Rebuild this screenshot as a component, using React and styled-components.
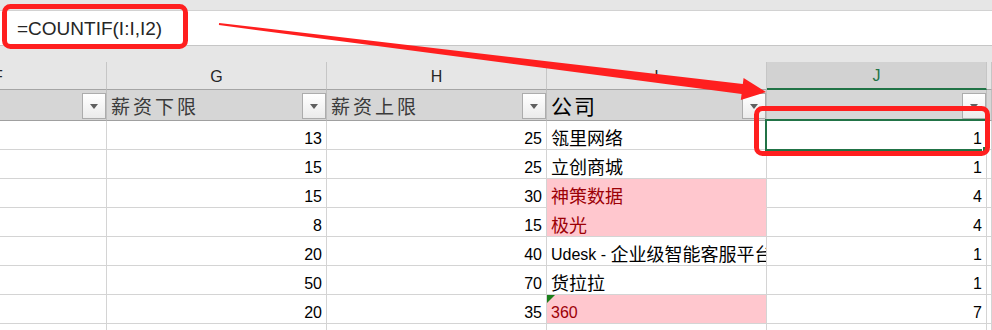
import React from 'react';
import styled, { createGlobalStyle } from 'styled-components';

const GlobalStyle = createGlobalStyle`
  html, body { margin: 0; padding: 0; background: #e6e6e6; }
  body { font-family: "Liberation Sans", "Noto Sans CJK SC", sans-serif; }
  #root { width: 992px; }
`;

const COLS = '107px 220px 220px 220px 220px 1fr';
const GRID = '#d4d4d4';
const PINK = '#ffc7ce';
const GREEN = '#217346';

const Page = styled.div`
  position: relative;
  width: 992px;
  height: 330px;
  overflow: hidden;
  background: #e6e6e6;
  padding-top: 10px;
  box-sizing: border-box;
`;

const FormulaBar = styled.div`
  height: 36px;
  box-sizing: border-box;
  background: #fff;
  border-top: 1px solid #d2d2d2;
  border-bottom: 1px solid #c6c6c6;
  display: flex;
  align-items: center;
  padding: 2px 0 0 17px;
  font: 19px "Liberation Sans", sans-serif;
  color: #262626;
`;

const Sheet = styled.div`
  margin-top: 16px;
`;

const Row = styled.div`
  display: grid;
  grid-template-columns: ${COLS};
  height: ${(p) => p.$h}px;
`;

const ColHead = styled.div`
  box-sizing: border-box;
  overflow: hidden;
  border-right: 1px solid #c6c6c6;
  border-bottom: ${(p) => (p.$active ? `2px solid ${GREEN}` : '1px solid #a5a5a5')};
  background: ${(p) => (p.$active ? '#d2d2d2' : '#e6e6e6')};
  color: ${(p) => (p.$active ? GREEN : '#262626')};
  display: flex;
  justify-content: ${(p) => (p.$cut ? 'flex-start' : 'center')};
  align-items: center;
  padding-top: 2px;
  font-size: 16px;
`;

const CutLetter = styled.span`
  margin-left: -7px;
`;

const HeadCell = styled.div`
  box-sizing: border-box;
  min-width: 0;
  overflow: hidden;
  background: #d6d6d6;
  border-right: 1px solid #bebebe;
  border-bottom: 1px solid #a0a0a0;
  display: flex;
  align-items: center;
  justify-content: space-between;
  padding-left: 4px;
`;

const HeadLabel = styled.span`
  font-family: "Noto Sans CJK SC", sans-serif;
  font-size: ${(p) => (p.$strong ? 21 : 19)}px;
  letter-spacing: ${(p) => (p.$strong ? 2 : 3)}px;
  color: ${(p) => (p.$strong ? '#000' : '#3a3a3a')};
  white-space: nowrap;
  line-height: 1;
  padding-top: 1px;
`;

const FilterButton = styled.span`
  width: 24px;
  height: 26px;
  box-sizing: border-box;
  flex-shrink: 0;
  align-self: flex-end;
  margin-bottom: 1px;
  border: 1px solid #acacac;
  background: linear-gradient(#ffffff, #ebebeb);
  display: flex;
  align-items: center;
  justify-content: center;
  &::after {
    content: '';
    border-left: 4.5px solid transparent;
    border-right: 4.5px solid transparent;
    border-top: 5px solid #5f5f5f;
  }
`;

const Cell = styled.div`
  position: relative;
  box-sizing: border-box;
  min-width: 0;
  overflow: ${(p) => (p.$clip ? 'hidden' : 'visible')};
  border-right: 1px solid ${GRID};
  border-bottom: 1px solid ${(p) => (p.$dup && p.$nextDup ? PINK : GRID)};
  background: ${(p) => (p.$dup ? PINK : '#fff')};
  color: ${(p) => (p.$dup ? '#9c0006' : '#000')};
  display: flex;
  align-items: flex-end;
  justify-content: ${(p) => (p.$right ? 'flex-end' : 'flex-start')};
  padding: ${(p) => (p.$right ? '0 4px 0 0' : '0 0 0 4px')};
  font-family: "Liberation Sans", "Noto Sans CJK SC", sans-serif;
  font-size: ${(p) => (p.$cjk ? 18 : 16)}px;
  line-height: 20px;
  white-space: nowrap;
`;

const Latin = styled.span`
  font-size: 16px;
  white-space: pre;
`;

const Selection = styled.span`
  position: absolute;
  z-index: 2;
  top: -2px;
  left: -2px;
  right: -1px;
  bottom: -2px;
  border: 2px solid ${GREEN};
  pointer-events: none;
  &::after {
    content: '';
    position: absolute;
    right: -3px;
    bottom: -3px;
    width: 5px;
    height: 5px;
    background: ${GREEN};
    border-left: 1px solid #fff;
    border-top: 1px solid #fff;
  }
`;

const ErrorMark = styled.span`
  position: absolute;
  top: 0;
  left: 0;
  width: 0;
  height: 0;
  border-top: 8px solid #1a7f1a;
  border-right: 8px solid transparent;
`;

const Annotations = styled.svg`
  position: absolute;
  left: 0;
  top: 0;
  z-index: 5;
  pointer-events: none;
`;

const rows = [
  { g: 13, h: 25, i: '瓴里网络', j: 1, k: '上海' },
  { g: 15, h: 25, i: '立创商城', j: 1, k: '北京' },
  { g: 15, h: 30, i: '神策数据', j: 4, k: '数据', dup: true },
  { g: 8, h: 15, i: '极光', j: 4, k: '北京', dup: true },
  { g: 20, h: 40, i: 'Udesk - 企业级智能客服平台', j: 1, k: '北京' },
  { g: 50, h: 70, i: '货拉拉', j: 1, k: '深圳' },
  { g: 20, h: 35, i: '360', j: 7, k: '北京', dup: true, err: true },
  { empty: true },
];

function Mixed({ text }) {
  const parts = text.split(/([\x00-\x7F]+)/).filter(Boolean);
  return parts.map((p, idx) =>
    /^[\x00-\x7F]+$/.test(p) ? <Latin key={idx}>{p}</Latin> : <span key={idx}>{p}</span>
  );
}

export default function App() {
  return (
    <>
      <GlobalStyle />
      <Page>
        <FormulaBar>=COUNTIF(I:I,I2)</FormulaBar>
        <Sheet>
          <Row $h={28}>
            <ColHead $cut><CutLetter>F</CutLetter></ColHead>
            <ColHead>G</ColHead>
            <ColHead>H</ColHead>
            <ColHead>I</ColHead>
            <ColHead $active>J</ColHead>
            <ColHead />
          </Row>
          <Row $h={31}>
            <HeadCell><span /><FilterButton /></HeadCell>
            <HeadCell><HeadLabel>薪资下限</HeadLabel><FilterButton /></HeadCell>
            <HeadCell><HeadLabel>薪资上限</HeadLabel><FilterButton /></HeadCell>
            <HeadCell><HeadLabel $strong>公司</HeadLabel><FilterButton /></HeadCell>
            <HeadCell><span /><FilterButton /></HeadCell>
            <HeadCell />
          </Row>
          {rows.map((r, idx) => {
            const next = rows[idx + 1] || {};
            return (
              <Row $h={29} key={idx}>
                <Cell />
                <Cell $right>{r.g}</Cell>
                <Cell $right>{r.h}</Cell>
                <Cell $cjk $clip $dup={r.dup} $nextDup={next.dup}>
                  {r.err && <ErrorMark />}
                  {r.i && <Mixed text={r.i} />}
                </Cell>
                <Cell $right>
                  {r.j}
                  {idx === 0 && <Selection />}
                </Cell>
                <Cell $cjk $clip>{r.k}</Cell>
              </Row>
            );
          })}
        </Sheet>
        <Annotations width="992" height="330" viewBox="0 0 992 330">
          <rect x="4.5" y="6.5" width="181" height="40" rx="6" fill="none" stroke="#ff1f1f" strokeWidth="5" />
          <rect x="756.5" y="108.5" width="231" height="45" rx="6" fill="none" stroke="#ff1f1f" strokeWidth="5" />
          <polygon
            points="219.1,23 742.8,84 743.6,78.1 766,92 740.8,99.9 741.6,94 218.9,25"
            fill="#ff1f1f"
          />
        </Annotations>
      </Page>
    </>
  );
}
